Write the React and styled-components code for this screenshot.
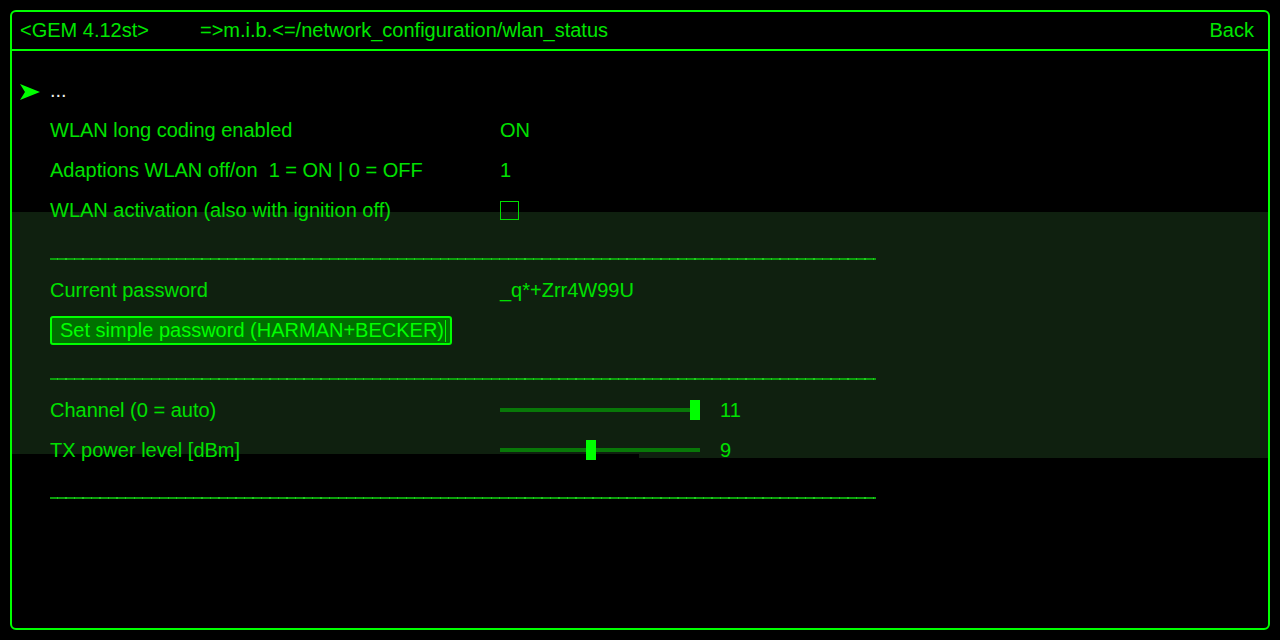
import { styled, createGlobalStyle } from "styled-components";

const GlobalStyle = createGlobalStyle`
  html, body {
    margin: 0;
    padding: 0;
    background: #000;
  }
  body {
    font-family: "Liberation Sans", Arial, sans-serif;
    color: #00e000;
  }
`;

const Screen = styled.div`
  width: 1280px;
  height: 640px;
  padding: 10px;
  box-sizing: border-box;
  background: #000;
`;

const Frame = styled.div`
  position: relative;
  height: 620px;
  box-sizing: border-box;
  border: 2px solid #00ff00;
  border-radius: 6px;
  display: flex;
  flex-direction: column;
`;

const Highlight = styled.div`
  position: absolute;
  left: 0;
  right: 0;
  top: 200px;
  height: 242px;
  background: #0f200f;
  z-index: 0;

  &::after {
    content: "";
    position: absolute;
    left: 627px;
    right: 0;
    top: 242px;
    height: 4px;
    background: #0f200f;
  }
`;

const Header = styled.header`
  height: 37px;
  border-bottom: 2px solid #00ff00;
  display: flex;
  align-items: center;
  padding: 0 14px 0 8px;
  font-size: 20px;
  color: #00e600;
  position: relative;
  z-index: 1;
`;

const Version = styled.span`
  width: 180px;
`;

const Path = styled.span`
  flex: 1;
`;

const BackLink = styled.span`
  cursor: pointer;
`;

const Content = styled.div`
  position: relative;
  z-index: 1;
  padding: 19px 0 0 8px;
  display: flex;
  flex-direction: column;
`;

const Row = styled.div`
  height: 40px;
  display: grid;
  grid-template-columns: 30px 450px 1fr;
  align-items: center;
  font-size: 20px;
`;

const Marker = styled.span`
  display: flex;
  align-items: center;
  padding-top: 3px;
`;

const Label = styled.span`
  color: ${(p) => (p.$dim ? "#f0f0f0" : "#00e000")};
`;

const Value = styled.span`
  display: flex;
  align-items: center;
  gap: 20px;
`;

const Checkbox = styled.span`
  width: 17px;
  height: 17px;
  border: 1px solid #00e000;
  display: inline-block;
`;

const SeparatorRow = styled.div`
  height: 40px;
  display: flex;
  align-items: flex-end;
  padding-left: 30px;
  padding-bottom: ${(p) => p.$bottom || 10}px;
  box-sizing: border-box;
`;

const Separator = styled.div`
  width: 826px;
  height: 2px;
  background: repeating-linear-gradient(
    90deg,
    #0c9c0c 0,
    #0c9c0c 7px,
    #22c822 7px,
    #22c822 8.5px
  );
`;

const ActionButton = styled.button`
  grid-column: 2 / 4;
  justify-self: start;
  position: relative;
  height: 29px;
  padding: 0 6px 0 8px;
  background: #007000;
  border: 2px solid #00ff00;
  border-radius: 3px;
  color: #00ff00;
  font-family: "Liberation Sans", Arial, sans-serif;
  font-size: 20px;
  line-height: 25px;
  cursor: pointer;

  &::after {
    content: "";
    position: absolute;
    right: 4px;
    top: 2px;
    bottom: 1px;
    width: 1px;
    background: #00ff00;
  }
`;

const Track = styled.div`
  position: relative;
  width: 200px;
  height: 4px;
  background: #087808;
`;

const Thumb = styled.div`
  position: absolute;
  top: -8px;
  width: 10px;
  height: 20px;
  background: #00ff00;
`;

const Arrow = () => (
  <svg width="20" height="18" viewBox="0 0 20 18">
    <polygon points="0,1 20,9 0,17 5,9" fill="#00ff00" />
  </svg>
);

const Slider = ({ value, min, max }) => {
  const left = ((value - min) / (max - min)) * 190;
  return (
    <Track>
      <Thumb style={{ left }} />
    </Track>
  );
};

export default function App() {
  return (
    <>
      <GlobalStyle />
      <Screen>
        <Frame>
          <Highlight />
          <Header>
            <Version>&lt;GEM 4.12st&gt;</Version>
            <Path>=&gt;m.i.b.&lt;=/network_configuration/wlan_status</Path>
            <BackLink>Back</BackLink>
          </Header>
          <Content>
            <Row>
              <Marker>
                <Arrow />
              </Marker>
              <Label $dim>...</Label>
            </Row>
            <Row>
              <span />
              <Label>WLAN long coding enabled</Label>
              <Value>ON</Value>
            </Row>
            <Row>
              <span />
              <Label>Adaptions WLAN off/on&nbsp; 1 = ON | 0 = OFF</Label>
              <Value>1</Value>
            </Row>
            <Row>
              <span />
              <Label>WLAN activation (also with ignition off)</Label>
              <Value>
                <Checkbox />
              </Value>
            </Row>
            <SeparatorRow $bottom={10}>
              <Separator />
            </SeparatorRow>
            <Row>
              <span />
              <Label>Current password</Label>
              <Value>_q*+Zrr4W99U</Value>
            </Row>
            <Row>
              <span />
              <ActionButton>Set simple password (HARMAN+BECKER)</ActionButton>
            </Row>
            <SeparatorRow $bottom={10}>
              <Separator />
            </SeparatorRow>
            <Row>
              <span />
              <Label>Channel (0 = auto)</Label>
              <Value>
                <Slider value={11} min={0} max={11} />
                11
              </Value>
            </Row>
            <Row>
              <span />
              <Label>TX power level [dBm]</Label>
              <Value>
                <Slider value={9} min={0} max={20} />
                9
              </Value>
            </Row>
            <SeparatorRow $bottom={11}>
              <Separator />
            </SeparatorRow>
          </Content>
        </Frame>
      </Screen>
    </>
  );
}
